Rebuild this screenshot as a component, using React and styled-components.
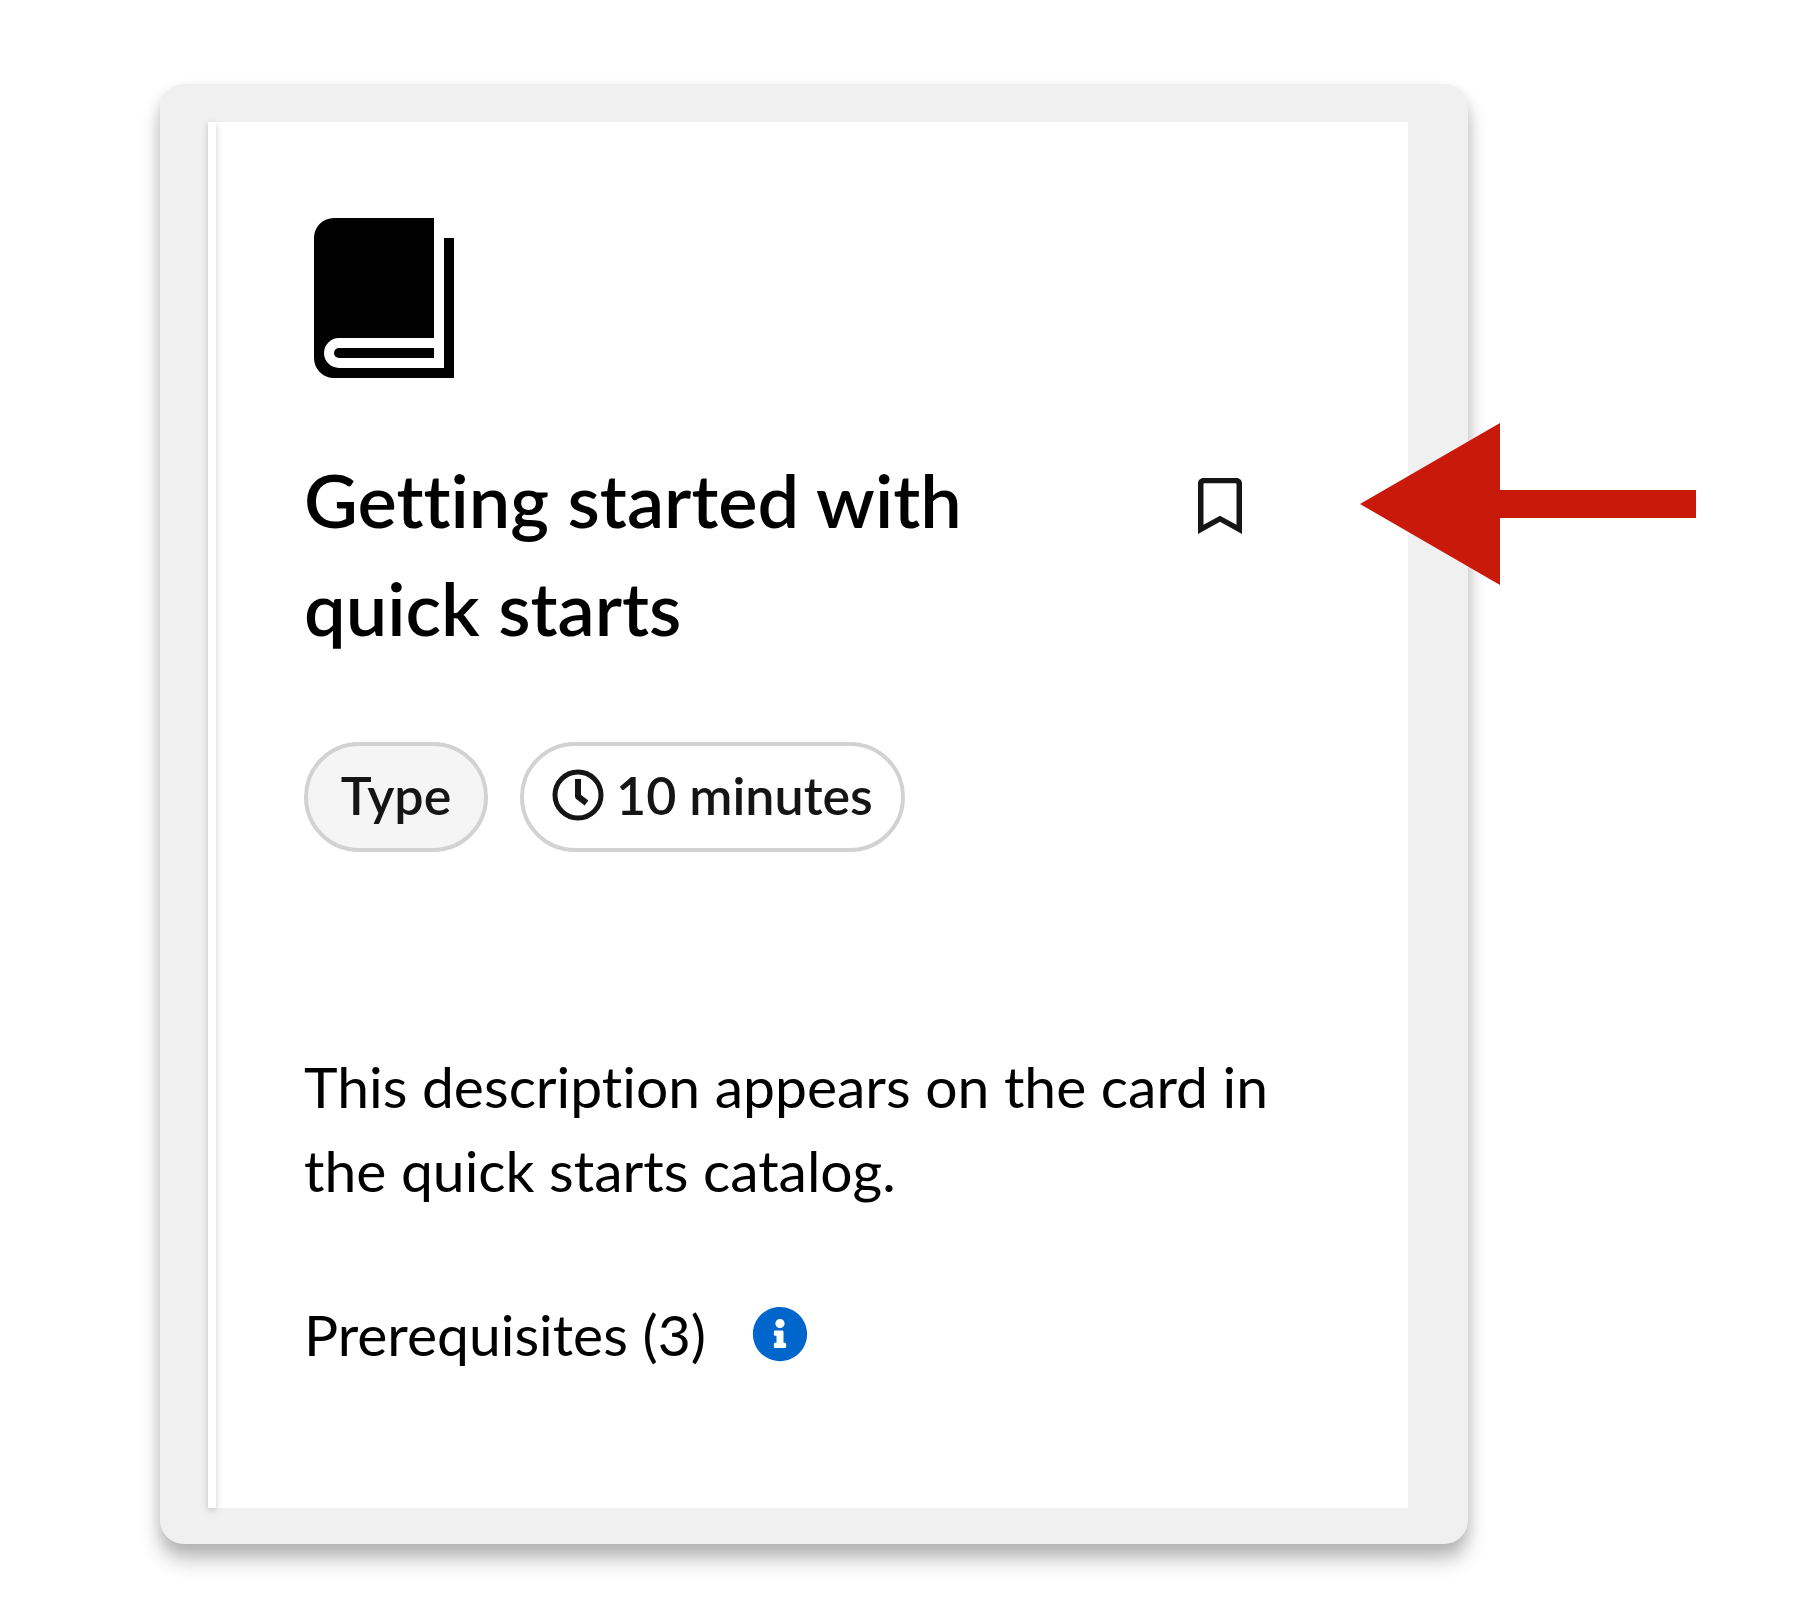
import React from "react";
import styled, { createGlobalStyle } from "styled-components";
import { FaInfoCircle, FaRegBookmark } from "react-icons/fa";

const GlobalStyle = createGlobalStyle`
  * {
    box-sizing: border-box;
  }
  body {
    margin: 0;
    background: #fff;
    color: #000;
    font-family: Lato, "Liberation Sans", sans-serif;
    font-variant-ligatures: none;
  }
`;

const Page = styled.main`
  padding: 84px 340px 80px 160px;
`;

const Frame = styled.div`
  padding: 38px 60px 36px 48px;
  border-radius: 24px;
  background: #f0f0f0;
  box-shadow: 0 16px 20px rgba(0, 0, 0, 0.24), 0 6px 14px rgba(0, 0, 0, 0.1);
`;

const Card = styled.article`
  display: flex;
  background: #fff;
`;

const Edge = styled.div`
  position: relative;
  flex: none;
  width: 8px;
  background: #fff;
  box-shadow: 0 2px 6px rgba(0, 0, 0, 0.2);
`;

const Content = styled.div`
  flex: 1;
  min-width: 0;
  padding: 96px 140px 132px 88px;
`;

const BookIcon = styled.svg`
  display: block;
  width: 160px;
  height: 160px;
`;

const TitleRow = styled.header`
  position: relative;
  display: flex;
  align-items: flex-start;
  justify-content: space-between;
  margin-top: 68px;
`;

const Title = styled.h1`
  margin: 0;
  max-width: 720px;
  font-size: 74px;
  line-height: 108px;
  font-weight: 600;
`;

const BookmarkButton = styled.button`
  display: flex;
  margin: 24px 0 0;
  padding: 8px 26px;
  border: 0;
  background: none;
  color: #151515;
  cursor: pointer;
  font-size: 56px;

  svg {
    width: 44px;
  }
`;

const Arrow = styled.svg`
  position: absolute;
  top: -24px;
  right: -428px;
  width: 336px;
  height: 164px;
  fill: #c9190b;
`;

const Tags = styled.div`
  display: flex;
  gap: 32px;
  margin-top: 80px;
`;

const Tag = styled.span`
  display: flex;
  align-items: center;
  justify-content: center;
  gap: 12px;
  min-width: 184px;
  height: 110px;
  padding: 0 28px 4px;
  border: 4px solid #d2d2d2;
  border-radius: 55px;
  background: ${({ $filled }) => ($filled ? "#f5f5f5" : "#fff")};
  color: #151515;
  font-size: 52px;
  line-height: 80px;
  font-weight: 600;
`;

const ClockIcon = styled.svg`
  flex: none;
  width: 52px;
  height: 52px;
  fill: none;
  stroke: currentColor;
  stroke-width: 5;
`;

const Description = styled.p`
  margin: 192px 0 0;
  font-size: 57px;
  line-height: 84px;
`;

const Prerequisites = styled.div`
  display: flex;
  align-items: center;
  gap: 46px;
  margin-top: 80px;
  font-size: 57px;
  line-height: 84px;
`;

const InfoButton = styled.button`
  display: flex;
  padding: 0;
  border: 0;
  background: none;
  color: #06c;
  cursor: pointer;
  font-size: 56px;
`;

export default function App() {
  return (
    <>
      <GlobalStyle />
      <Page>
        <Frame>
          <Card>
            <Edge />
            <Content>
              <BookIcon viewBox="0 0 16 16" aria-hidden="true">
                <path d="M13 0v12H3.500a1.500 1.500 0 0 0 0 3H14V2h1v14H3a2 2 0 0 1-2-2V2a2 2 0 0 1 2-2z" />
                <path d="M13 13v1H3.500a.5.5 0 0 1 0-1z" />
              </BookIcon>
              <TitleRow>
                <Title>Getting started with quick starts</Title>
                <BookmarkButton type="button" aria-label="Bookmark">
                  <FaRegBookmark preserveAspectRatio="none" />
                </BookmarkButton>
                <Arrow viewBox="0 0 336 164" aria-hidden="true">
                  <path d="M0 82 140 1v67h196v28H140v67z" />
                </Arrow>
              </TitleRow>
              <Tags>
                <Tag $filled>Type</Tag>
                <Tag>
                  <ClockIcon viewBox="0 0 52 52" aria-hidden="true">
                    <circle cx="26" cy="26" r="23" />
                    <path d="M26 10v17.500l8.500 6.500" strokeWidth="6" strokeLinejoin="round" />
                  </ClockIcon>
                  10 minutes
                </Tag>
              </Tags>
              <Description>
                This description appears on the card in the quick starts catalog.
              </Description>
              <Prerequisites>
                Prerequisites (3)
                <InfoButton type="button" aria-label="Show prerequisites">
                  <FaInfoCircle />
                </InfoButton>
              </Prerequisites>
            </Content>
          </Card>
        </Frame>
      </Page>
    </>
  );
}
